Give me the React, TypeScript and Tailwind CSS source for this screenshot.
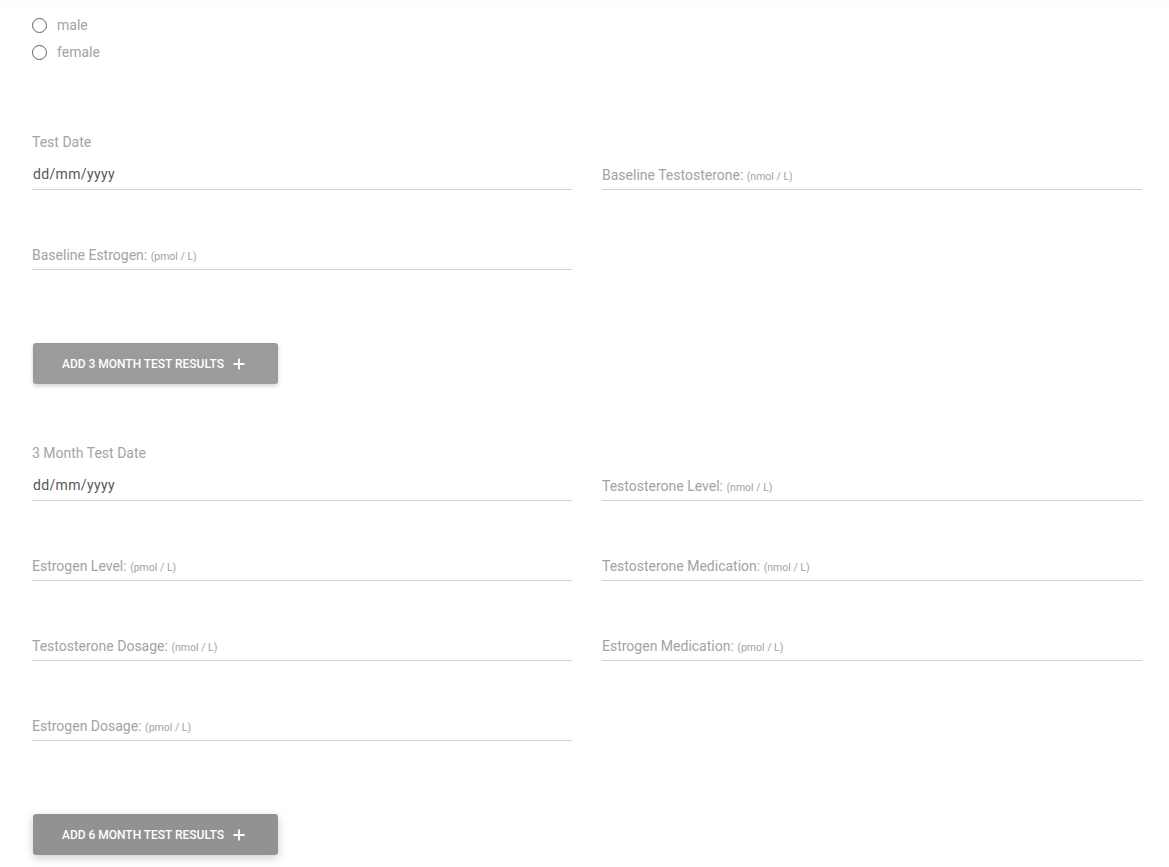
import React from 'react';

type FieldProps = {
  label: string;
  unit: string;
};

// Поле со "плавающей" подписью, единицы измерения мелким шрифтом
const UnitField: React.FC<FieldProps> = ({ label, unit }) => (
  <div className="h-[30px] border-b border-[#d2d2d2] flex items-center pt-[1px]">
    <span className="text-[14px] text-[#a3a3a3] leading-none">
      {label}: <span className="text-[10.5px]">{unit}</span>
    </span>
  </div>
);

const DateField: React.FC<{ label: string }> = ({ label }) => (
  <div>
    <div className="h-[20px] leading-[20px] text-[14px] text-[#a3a3a3]">{label}</div>
    <div className="mt-[8px] h-[30px] border-b border-[#d2d2d2] flex items-center pb-[1px]">
      <span className="text-[14px] tracking-[0.35px] text-[#575757] pl-[1px]">dd/mm/yyyy</span>
    </div>
  </div>
);

const AddButton: React.FC<{ text: string; hover?: boolean }> = ({ text, hover = false }) => (
  <button
    className={
      hover
        ? 'w-[245px] h-[41px] ml-[1px] rounded-[3px] bg-[#929292] text-white text-[12px] font-medium flex items-center pl-[29px] shadow-[0_3px_10px_rgba(0,0,0,0.2)]'
        : 'w-[245px] h-[41px] ml-[1px] rounded-[3px] bg-[#9b9b9b] text-white text-[12px] font-medium flex items-center pl-[29px] shadow-[0_2px_4px_rgba(0,0,0,0.18)]'
    }
  >
    <span className="tracking-[-0.02px]">{text}</span>
    <svg className="ml-[9px] w-[12px] h-[12px]" viewBox="0 0 12 12" fill="none" stroke="currentColor" strokeWidth={1.8}>
      <path d="M6 0.5v11M0.5 6h11" />
    </svg>
  </button>
);

const Radio: React.FC<{ label: string }> = ({ label }) => (
  <label className="h-[27px] flex items-center">
    <span className="w-[15px] h-[15px] rounded-full border border-[#5f5f5f] bg-white" />
    <span className="ml-[10px] text-[14px] text-[#a3a3a3]">{label}</span>
  </label>
);

export default function App() {
  return (
    <div className="min-h-[867px] bg-white font-['Roboto',sans-serif] relative">
      <div className="absolute top-0 left-0 right-0 h-[1px] shadow-[0_1px_8px_rgba(0,0,0,0.12)]" />
      <div className="pl-[32px] w-[1142px] pt-[12px] pb-[12px]">
        <div>
          <Radio label="male" />
          <Radio label="female" />
        </div>

        <div className="mt-[66px] grid grid-cols-2 gap-x-[30px] gap-y-[50px] items-end">
          <DateField label="Test Date" />
          <UnitField label="Baseline Testosterone" unit="(nmol / L)" />
          <UnitField label="Baseline Estrogen" unit="(pmol / L)" />
        </div>

        <div className="mt-[73px]">
          <AddButton text="ADD 3 MONTH TEST RESULTS" />
        </div>

        <div className="mt-[59px] grid grid-cols-2 gap-x-[30px] gap-y-[50px] items-end">
          <DateField label="3 Month Test Date" />
          <UnitField label="Testosterone Level" unit="(nmol / L)" />
          <UnitField label="Estrogen Level" unit="(pmol / L)" />
          <UnitField label="Testosterone Medication" unit="(nmol / L)" />
          <UnitField label="Testosterone Dosage" unit="(nmol / L)" />
          <UnitField label="Estrogen Medication" unit="(pmol / L)" />
          <UnitField label="Estrogen Dosage" unit="(pmol / L)" />
        </div>

        <div className="mt-[73px]">
          <AddButton text="ADD 6 MONTH TEST RESULTS" hover />
        </div>
      </div>
    </div>
  );
}
